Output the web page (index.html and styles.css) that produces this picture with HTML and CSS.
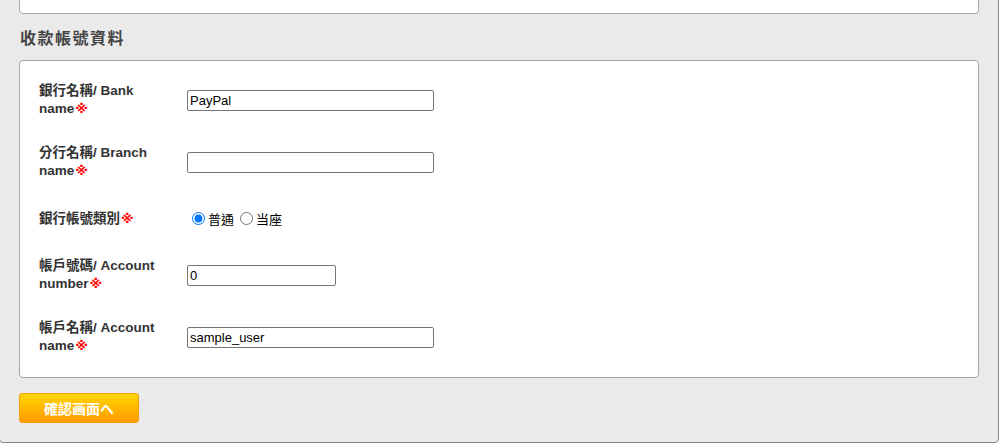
FILE: index.html
```html
<!DOCTYPE html>
<html lang="zh-Hant">
<head>
<meta charset="utf-8">
<title>收款帳號資料</title>
<link rel="stylesheet" href="styles.css">
</head>
<body>
<div class="page">
  <div class="card card-prev"></div>

  <h2 class="section-title">收款帳號資料</h2>

  <div class="card card-form">
    <div class="form-grid">
      <div class="field-label"><span>銀行名稱/ Bank</span> <span class="en">name<span class="req">※</span></span></div>
      <div class="field-input"><input class="text-input wide" type="text" value="PayPal"></div>

      <div class="field-label"><span>分行名稱/ Branch</span> <span class="en">name<span class="req">※</span></span></div>
      <div class="field-input"><input class="text-input wide" type="text" value=""></div>

      <div class="field-label"><span class="en">銀行帳號類別<span class="req">※</span></span></div>
      <div class="field-input">
        <div class="radio-group">
          <label class="radio"><input type="radio" name="acctype" checked>普通</label>
          <label class="radio"><input type="radio" name="acctype">当座</label>
        </div>
      </div>

      <div class="field-label"><span>帳戶號碼/ Account</span> <span class="en">number<span class="req">※</span></span></div>
      <div class="field-input"><input class="text-input narrow" type="text" value="0"></div>

      <div class="field-label"><span>帳戶名稱/ Account</span> <span class="en">name<span class="req">※</span></span></div>
      <div class="field-input"><input class="text-input wide" type="text" value="sample_user"></div>
    </div>
  </div>

  <div class="actions">
    <button class="btn-confirm" type="button">確認画面へ</button>
  </div>
</div>
</body>
</html>
```

FILE: styles.css
```css
html, body {
  margin: 0;
  padding: 0;
  background: #ffffff;
}

body {
  font-family: "Liberation Sans", "Noto Sans CJK TC", sans-serif;
  color: #333;
}

.page {
  box-sizing: border-box;
  width: 1000px;
  margin: -60px 0 0 -1px;
  padding: 19px 19px 19px 19px;
  background: #eaeaea;
  border: 1px solid #888;
  border-radius: 0 0 4px 4px;
}

.card {
  background: #fff;
  border: 1px solid #a6a6a6;
  border-radius: 4px;
  box-sizing: border-box;
}

.card-prev {
  height: 54px;
}

.section-title {
  margin: 11px 0 11px 1px;
  font-family: "Noto Sans CJK TC", sans-serif;
  font-size: 16px;
  line-height: 24px;
  font-weight: bold;
  letter-spacing: 1.5px;
  color: #444;
}

.card-form {
  padding: 8px 19px 9px 19px;
}

.form-grid {
  display: grid;
  grid-template-columns: 148px 1fr;
  align-items: center;
}

.field-label {
  box-sizing: border-box;
  max-width: 130px;
  padding: 13px 0;
  font-size: 13.5px;
  line-height: 18px;
  font-weight: bold;
  color: #333;
}

.field-label .en {
  white-space: nowrap;
}

.req {
  margin-left: 1px;
  font-family: "DejaVu Sans", "Noto Sans CJK JP", sans-serif;
  font-size: 13px;
  line-height: 1;
  font-weight: bold;
  color: #f00;
}

.field-input {
  padding: 13px 0;
}

.text-input {
  box-sizing: border-box;
  display: block;
  height: 21px;
  padding: 1px 2px;
  border: 1px solid #767676;
  border-radius: 2px;
  font-family: "Liberation Sans", "Noto Sans CJK TC", sans-serif;
  font-size: 13px;
  color: #000;
  background: #fff;
}

.text-input.wide {
  width: 247px;
}

.text-input.narrow {
  width: 149px;
}

.radio-group {
  height: 25px;
  display: flex;
  align-items: center;
  font-family: "Noto Sans CJK TC", sans-serif;
  font-size: 13px;
  color: #000;
}

.radio {
  display: inline-flex;
  align-items: center;
  margin-right: 1px;
}

.radio input {
  width: 13px;
  height: 13px;
  margin: 0 3px 0 5px;
}

.actions {
  margin-top: 15px;
}

.btn-confirm {
  display: block;
  box-sizing: border-box;
  width: 120px;
  height: 30px;
  padding: 0;
  border: 1px solid #f5a000;
  border-radius: 3px;
  background: linear-gradient(to bottom, #ffd500 0%, #ff9a00 100%);
  color: #fff;
  font-family: "Noto Sans CJK TC", sans-serif;
  font-size: 14px;
  font-weight: bold;
  cursor: pointer;
}
```
